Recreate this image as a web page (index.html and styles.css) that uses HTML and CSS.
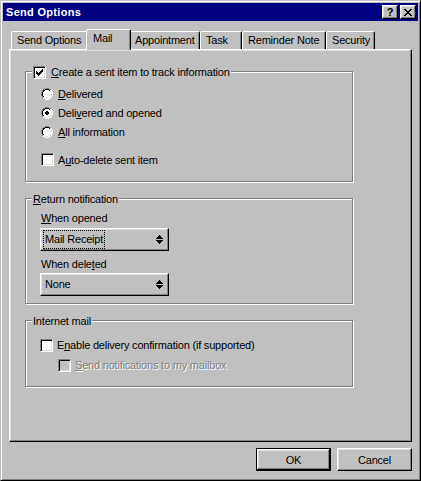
FILE: index.html
```html
<!DOCTYPE html>
<html>
<head>
<meta charset="utf-8">
<title>Send Options</title>
<link rel="stylesheet" href="styles.css">
</head>
<body>
<div class="window">
  <div class="titlebar">
    <span class="title">Send Options</span>
    <div class="title-buttons">
      <span class="tbtn help">?</span>
      <span class="tbtn"><svg class="px" width="8" height="7" viewBox="0 0 8 7"><use href="#xglyph"/></svg></span>
    </div>
  </div>

  <div class="tabs">
    <div class="tab t-send">Send Options</div>
    <div class="tab t-mail active">Mail</div>
    <div class="tab t-appt">Appointment</div>
    <div class="tab t-task">Task</div>
    <div class="tab t-rem">Reminder Note</div>
    <div class="tab t-sec">Security</div>
  </div>

  <div class="panel">
    <div class="group g-track">
      <div class="legend">
        <span class="cb"><svg class="px" width="7" height="7" viewBox="0 0 7 7"><use href="#check"/></svg></span>
        <span class="legend-text"><u>C</u>reate a sent item to track information</span>
      </div>
      <div class="opt">
        <svg class="radio px" width="12" height="12" viewBox="0 0 12 12"><use href="#radio"/></svg>
        <span><u>D</u>elivered</span>
      </div>
      <div class="opt">
        <svg class="radio px" width="12" height="12" viewBox="0 0 12 12"><use href="#radio"/><use href="#dot"/></svg>
        <span>Deli<u>v</u>ered and opened</span>
      </div>
      <div class="opt">
        <svg class="radio px" width="12" height="12" viewBox="0 0 12 12"><use href="#radio"/></svg>
        <span><u>A</u>ll information</span>
      </div>
      <div class="opt opt-sep">
        <span class="cb"></span>
        <span>A<u>u</u>to-delete sent item</span>
      </div>
    </div>

    <div class="group g-return">
      <div class="legend"><span><u>R</u>eturn notification</span></div>
      <div class="label"><u>W</u>hen opened</div>
      <div class="select">
        <span class="value focus">Mail Receipt</span>
        <svg class="updown px" width="7" height="9" viewBox="0 0 7 9"><use href="#updown"/></svg>
      </div>
      <div class="label label-2">When dele<u>t</u>ed</div>
      <div class="select select-2">
        <span class="value">None</span>
        <svg class="updown px" width="7" height="9" viewBox="0 0 7 9"><use href="#updown"/></svg>
      </div>
    </div>

    <div class="group g-internet">
      <div class="legend"><span>Internet mail</span></div>
      <div class="opt opt-tall">
        <span class="cb"></span>
        <span>E<u>n</u>able delivery confirmation (if supported)</span>
      </div>
      <div class="opt opt-tall opt-indent disabled">
        <span class="cb cb-disabled"></span>
        <span><u>S</u>end notifications to my mailbox</span>
      </div>
    </div>
  </div>

  <div class="actions">
    <div class="btn default">OK</div>
    <div class="btn">Cancel</div>
  </div>
</div>

<svg class="defs" width="0" height="0" aria-hidden="true">
  <symbol id="radio" viewBox="0 0 12 12">
    <path fill="#808080" d="M4 0h4v1H4z M2 1h2v1H2z M8 1h2v1H8z M1 2h1v2H1z M0 4h1v4H0z M1 8h1v2H1z"/>
    <path fill="#ffffff" d="M10 2h1v2h-1z M11 4h1v4h-1z M10 8h1v2h-1z M2 10h2v1H2z M8 10h2v1H8z M4 11h4v1H4z"/>
    <path fill="#000000" d="M4 1h4v1H4z M2 2h2v1H2z M8 2h1v1H8z M2 3h1v1H2z M1 4h1v4H1z M2 8h1v1H2z"/>
    <path fill="#dfdfdf" d="M9 2h1v2H9z M10 4h1v4h-1z M9 8h1v1H9z M2 9h2v1H2z M8 9h2v1H8z M4 10h4v1H4z"/>
    <path fill="#ffffff" d="M4 2h4v1H4z M3 3h6v1H3z M2 4h8v4H2z M3 8h6v1H3z M4 9h4v1H4z"/>
  </symbol>
  <symbol id="dot" viewBox="0 0 12 12">
    <path fill="#000" d="M5 4h2v1H5z M4 5h4v2H4z M5 7h2v1H5z"/>
  </symbol>
  <symbol id="check" viewBox="0 0 7 7">
    <path fill="#000" d="M6 0h1v1H6z M5 1h2v1H5z M0 2h1v1H0z M4 2h3v1H4z M0 3h2v1H0z M3 3h3v1H3z M0 4h5v1H0z M1 5h3v1H1z M2 6h1v1H2z"/>
  </symbol>
  <symbol id="updown" viewBox="0 0 7 9">
    <path fill="#000" d="M3 0h1v1H3z M2 1h3v1H2z M1 2h5v1H1z M0 3h7v1H0z M0 5h7v1H0z M1 6h5v1H1z M2 7h3v1H2z M3 8h1v1H3z"/>
  </symbol>
  <symbol id="xglyph" viewBox="0 0 8 7">
    <path fill="#000" d="M0 0h2v1H0z M6 0h2v1H6z M1 1h2v1H1z M5 1h2v1H5z M2 2h4v1H2z M3 3h2v1H3z M2 4h4v1H2z M1 5h2v1H1z M5 5h2v1H5z M0 6h2v1H0z M6 6h2v1H6z"/>
  </symbol>
</svg>
</body>
</html>
```

FILE: styles.css
```css
html, body {
  margin: 0;
  padding: 0;
  background: #c0c0c0;
}

body {
  font-family: "Liberation Sans", Arial, sans-serif;
  font-size: 11px;
  letter-spacing: -0.2px;
  color: #000;
}

.defs {
  display: block;
  width: 0;
  height: 0;
  overflow: hidden;
}

.px {
  display: block;
  shape-rendering: crispEdges;
  flex: none;
}

/* Window frame */
.window {
  width: 421px;
  height: 481px;
  box-sizing: border-box;
  border: 1px solid;
  border-color: #c0c0c0 #000 #000 #c0c0c0;
  box-shadow: inset 1px 1px 0 #fff, inset -1px -1px 0 #808080;
  padding: 2px;
  background: #c0c0c0;
  display: flex;
  flex-direction: column;
}

/* Title bar */
.titlebar {
  height: 18px;
  flex: none;
  background: #000080;
  color: #fff;
  display: flex;
  align-items: center;
  padding-left: 3px;
}

.title {
  font-weight: bold;
  letter-spacing: 0.3px;
}

.title-buttons {
  margin-left: auto;
  margin-right: 2px;
  display: flex;
  gap: 2px;
}

.tbtn {
  width: 16px;
  height: 14px;
  box-sizing: border-box;
  border: 1px solid;
  border-color: #fff #000 #000 #fff;
  box-shadow: inset -1px -1px 0 #808080, inset 1px 1px 0 #dfdfdf;
  background: #c0c0c0;
  color: #000;
  display: flex;
  align-items: center;
  justify-content: center;
}

.tbtn.help {
  font-weight: bold;
  font-size: 11px;
  line-height: 12px;
  letter-spacing: 0;
}

/* Tabs */
.tabs {
  height: 28px;
  flex: none;
  display: flex;
  align-items: flex-end;
  padding-left: 8px;
}

.tab {
  box-sizing: border-box;
  height: 18px;
  border: 1px solid;
  border-bottom: 0;
  border-color: #fff #000 transparent #fff;
  border-radius: 2px 2px 0 0;
  box-shadow: inset -1px 0 0 #808080;
  padding: 1px 0 0 5px;
  line-height: 15px;
  white-space: nowrap;
  background: #c0c0c0;
  flex: none;
}

.t-send { width: 77px; }
.t-mail { width: 41px; }
.t-appt { width: 71px; }
.t-task { width: 42px; }
.t-rem  { width: 84px; }
.t-sec  { width: 49px; }

.tab.active {
  position: relative;
  z-index: 1;
  height: 21px;
  width: 45px;
  margin: 0 -2px -1px;
  padding-left: 6px;
}

/* Panel */
.panel {
  margin: 0 6px;
  height: 393px;
  flex: none;
  box-sizing: border-box;
  border: 1px solid;
  border-color: #fff #000 #000 #fff;
  box-shadow: inset -1px -1px 0 #808080, inset 1px 1px 0 #dfdfdf;
  padding: 21px 0 0 15px;
}

/* Group boxes */
.group {
  position: relative;
  width: 328px;
  box-sizing: border-box;
  border: 1px solid #808080;
  box-shadow: inset 1px 1px 0 #fff, 1px 1px 0 #fff;
}

.g-track {
  height: 111px;
  padding: 12px 0 0 15px;
}

.g-return {
  margin-top: 16px;
  height: 106px;
  padding: 12px 0 0 14px;
}

.g-internet {
  margin-top: 16px;
  height: 67px;
  padding: 14px 0 0 14px;
}

.legend {
  position: absolute;
  top: -6px;
  left: 6px;
  height: 13px;
  line-height: 13px;
  padding: 0 1px;
  background: #c0c0c0;
  display: flex;
  align-items: center;
}

.legend .cb {
  margin-right: 5px;
}

/* Options */
.opt {
  display: flex;
  align-items: center;
  height: 19px;
  white-space: nowrap;
}

.opt-sep {
  margin-top: 9px;
}

.opt-tall {
  height: 20px;
}

.opt-indent {
  margin-left: 18px;
}

.radio {
  margin-right: 5px;
}

.cb {
  width: 13px;
  height: 13px;
  box-sizing: border-box;
  border: 1px solid;
  border-color: #808080 #fff #fff #808080;
  box-shadow: inset 1px 1px 0 #000, inset -1px -1px 0 #dfdfdf;
  background: #fff;
  display: flex;
  align-items: center;
  justify-content: center;
  flex: none;
}

.opt .cb {
  margin-right: 4px;
}

.cb-disabled {
  background: #c0c0c0;
}

.disabled {
  color: #808080;
  text-shadow: 1px 1px 0 #fff;
}

/* Labels and selects */
.label {
  height: 14px;
  line-height: 14px;
  padding-left: 1px;
}

.label-2 {
  margin-top: 6px;
}

.select {
  margin-top: 3px;
  width: 129px;
  height: 23px;
  box-sizing: border-box;
  border: 1px solid;
  border-color: #fff #000 #000 #fff;
  box-shadow: inset -1px -1px 0 #808080, inset 1px 1px 0 #dfdfdf;
  padding: 1px 2px;
  display: flex;
  align-items: center;
}

.select-2 {
  margin-top: 2px;
}

.value {
  height: 19px;
  box-sizing: border-box;
  border: 1px dotted transparent;
  padding: 0 1px;
  line-height: 17px;
  white-space: nowrap;
}

.value.focus {
  border-color: #000;
}

.updown {
  margin-left: auto;
  margin-right: 3px;
}

/* Dialog buttons */
.actions {
  display: flex;
  justify-content: flex-end;
  gap: 6px;
  margin: 6px 6px 0 0;
}

.btn {
  width: 75px;
  height: 23px;
  box-sizing: border-box;
  border: 1px solid;
  border-color: #fff #000 #000 #fff;
  box-shadow: inset -1px -1px 0 #808080, inset 1px 1px 0 #dfdfdf;
  display: flex;
  align-items: center;
  justify-content: center;
}

.btn.default {
  border-color: #000;
  box-shadow: inset -1px -1px 0 #000, inset 1px 1px 0 #fff, inset -2px -2px 0 #808080, inset 2px 2px 0 #dfdfdf;
}
```
